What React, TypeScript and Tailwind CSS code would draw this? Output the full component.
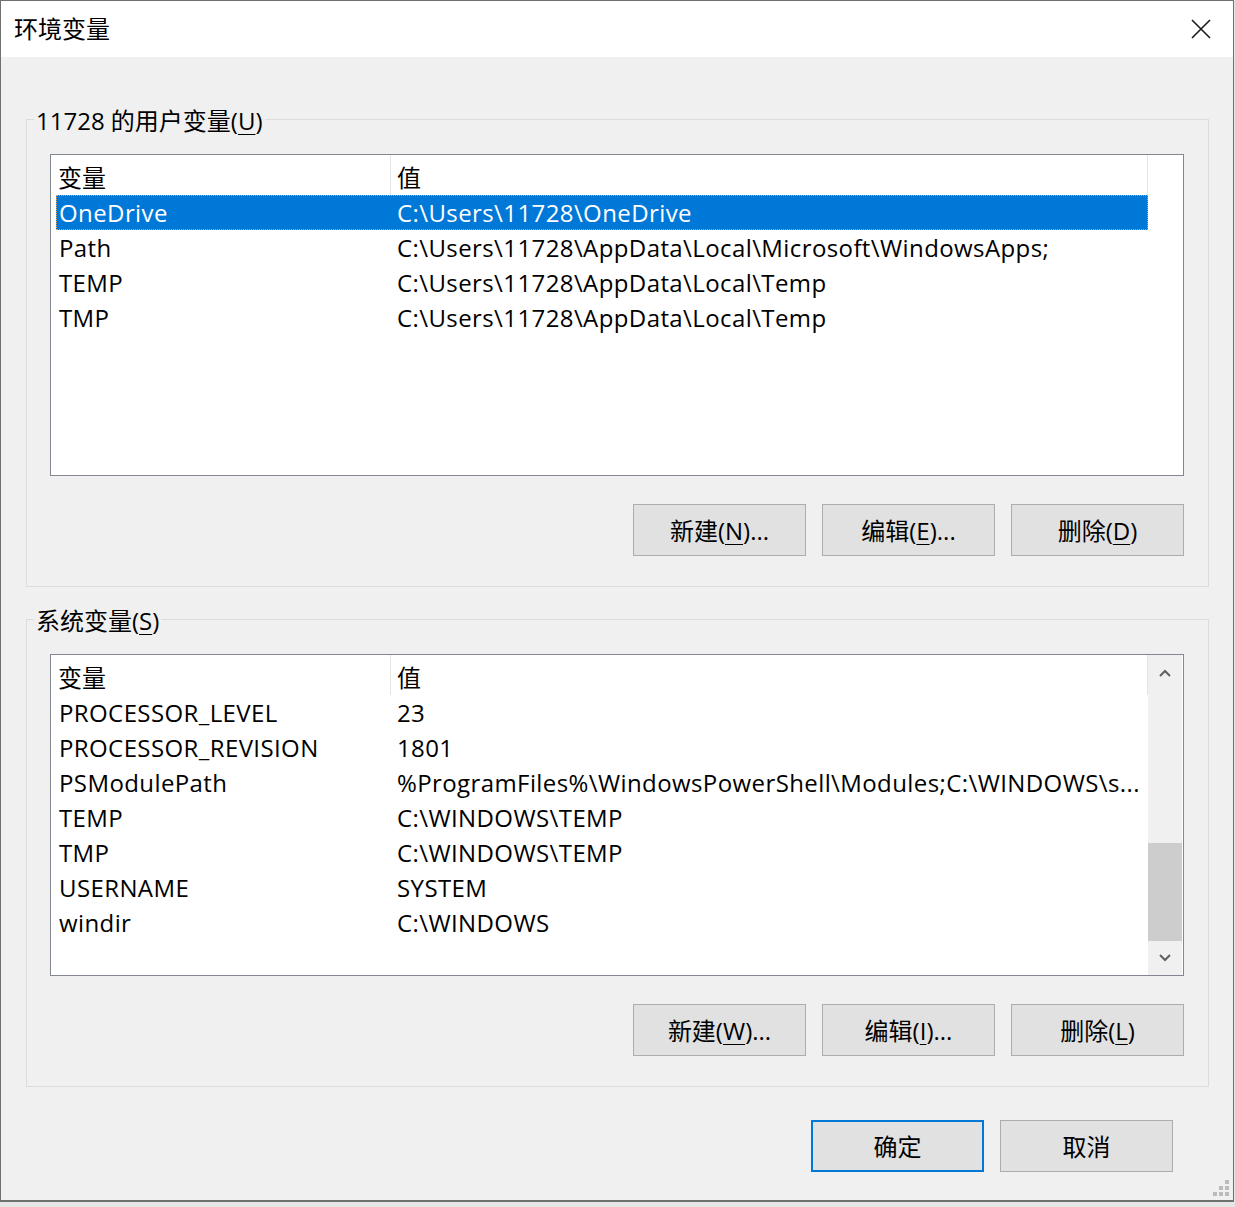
import React from "react";

const userVars: [string, string][] = [
  ["OneDrive", "C:\\Users\\11728\\OneDrive"],
  ["Path", "C:\\Users\\11728\\AppData\\Local\\Microsoft\\WindowsApps;"],
  ["TEMP", "C:\\Users\\11728\\AppData\\Local\\Temp"],
  ["TMP", "C:\\Users\\11728\\AppData\\Local\\Temp"],
];

const sysVars: [string, string][] = [
  ["PROCESSOR_LEVEL", "23"],
  ["PROCESSOR_REVISION", "1801"],
  ["PSModulePath", "%ProgramFiles%\\WindowsPowerShell\\Modules;C:\\WINDOWS\\s..."],
  ["TEMP", "C:\\WINDOWS\\TEMP"],
  ["TMP", "C:\\WINDOWS\\TEMP"],
  ["USERNAME", "SYSTEM"],
  ["windir", "C:\\WINDOWS"],
];

function Mn({ c }: { c: string }) {
  return <span className="underline decoration-1 underline-offset-[4px]">{c}</span>;
}

function Btn({ children, primary }: { children: React.ReactNode; primary?: boolean }) {
  return (
    <button
      className={
        primary
          ? "w-[173px] h-[52px] bg-[#e1e1e1] border-2 border-[#0078d7] text-[24px] text-black flex items-center justify-center pt-[2px]"
          : "w-[173px] h-[52px] bg-[#e1e1e1] border border-[#adadad] text-[24px] text-black flex items-center justify-center pt-[2px]"
      }
    >
      {children}
    </button>
  );
}

function Chevron({ up }: { up?: boolean }) {
  return (
    <svg width="12" height="8" viewBox="0 0 12 8">
      <path
        d={up ? "M1 7 L6 2 L11 7" : "M1 1 L6 6 L11 1"}
        fill="none"
        stroke="#606060"
        strokeWidth="2"
      />
    </svg>
  );
}

function Scrollbar() {
  return (
    <div className="w-[34px] bg-[#f0f0f0] flex flex-col">
      <div className="h-[34px] flex items-center justify-center pt-[2px]">
        <Chevron up />
      </div>
      <div className="flex-1 flex flex-col justify-end">
        <div className="h-[98px] bg-[#cdcdcd]" />
      </div>
      <div className="h-[34px] flex items-center justify-center">
        <Chevron />
      </div>
    </div>
  );
}

function VarList({
  rows,
  selected,
  scrollbar,
}: {
  rows: [string, string][];
  selected?: number;
  scrollbar?: boolean;
}) {
  return (
    <div className="h-[322px] border border-[#828790] bg-white flex">
      <div className="w-[1097px] flex flex-col">
        <div className="h-[40px] flex">
          <div className="w-[339px] flex items-center pl-[7px] pt-[5px]">变量</div>
          <div className="w-px h-full bg-[#e5e5e5]" />
          <div className="flex-1 flex items-center pl-[6px] pt-[5px]">值</div>
          <div className="w-px h-full bg-[#e5e5e5]" />
        </div>
        {rows.map(([n, v], i) => (
          <div
            key={n + i}
            className={
              i === selected
                ? "ml-[5px] w-[1092px] h-[35px] flex items-center pt-[1px] tracking-[0.4px] bg-[#0078d7] text-white outline outline-1 outline-dotted outline-[#e8a050] -outline-offset-1"
                : "ml-[5px] w-[1092px] h-[35px] flex items-center pt-[1px] tracking-[0.4px] text-black"
            }
          >
            <div className="w-[341px] pl-[3px] whitespace-nowrap">{n}</div>
            <div className="flex-1 whitespace-nowrap">{v}</div>
          </div>
        ))}
      </div>
      {scrollbar ? <Scrollbar /> : <div className="w-[34px]" />}
    </div>
  );
}

function Group({
  label,
  children,
  className,
}: {
  label: React.ReactNode;
  children: React.ReactNode;
  className?: string;
}) {
  return (
    <fieldset className={"border border-[#dcdcdc] " + (className ?? "")}>
      <legend className="ml-[7px] px-[2px] h-[32px] leading-[32px] text-[24px] text-black">
        <span className="relative top-[2px]">{label}</span>
      </legend>
      <div className="pl-[23px] pr-[24px] pb-[30px]">{children}</div>
    </fieldset>
  );
}

export default function App() {
  return (
    <div className="w-[1235px] h-[1207px] bg-[#e6e6e6] font-['Segoe_UI','Open_Sans','Noto_Sans_CJK_SC',sans-serif] text-[24px] text-black">
      <div className="relative w-[1234px] h-[1202px] border-t border-l border-r border-b-2 border-[#707070] flex flex-col">
        <div className="h-[56px] bg-white flex items-center justify-between pl-[13px] pr-[22px]">
          <span className="text-[24px] text-black">环境变量</span>
          <svg width="20" height="20" viewBox="0 0 20 20">
            <path d="M1 1 L19 19 M19 1 L1 19" stroke="#1a1a1a" strokeWidth="1.6" fill="none" />
          </svg>
        </div>
        <div className="flex-1 bg-[#f0f0f0] pl-[25px] pr-[24px] pt-[46px] flex flex-col">
          <Group
            label={
              <>
                11728 的用户变量(<Mn c="U" />)
              </>
            }
          >
            <div className="mt-[19px]">
              <VarList rows={userVars} selected={0} />
            </div>
            <div className="mt-[28px] flex justify-end gap-[16px]">
              <Btn>
                新建(<Mn c="N" />)...
              </Btn>
              <Btn>
                编辑(<Mn c="E" />)...
              </Btn>
              <Btn>
                删除(<Mn c="D" />)
              </Btn>
            </div>
          </Group>
          <Group
            className="mt-[16px]"
            label={
              <>
                系统变量(<Mn c="S" />)
              </>
            }
          >
            <div className="mt-[19px]">
              <VarList rows={sysVars} scrollbar />
            </div>
            <div className="mt-[28px] flex justify-end gap-[16px]">
              <Btn>
                新建(<Mn c="W" />)...
              </Btn>
              <Btn>
                编辑(<Mn c="I" />)...
              </Btn>
              <Btn>
                删除(<Mn c="L" />)
              </Btn>
            </div>
          </Group>
          <div className="mt-[33px] flex justify-end gap-[16px] pr-[36px]">
            <Btn primary>确定</Btn>
            <Btn>取消</Btn>
          </div>
        </div>
        <svg className="absolute right-[4px] bottom-[4px]" width="16" height="16" viewBox="0 0 16 16">
          <rect x="12" y="0" width="4" height="4" fill="#bcbcbc" />
          <rect x="6" y="6" width="4" height="4" fill="#bcbcbc" />
          <rect x="12" y="6" width="4" height="4" fill="#bcbcbc" />
          <rect x="0" y="12" width="4" height="4" fill="#bcbcbc" />
          <rect x="6" y="12" width="4" height="4" fill="#bcbcbc" />
          <rect x="12" y="12" width="4" height="4" fill="#bcbcbc" />
        </svg>
      </div>
    </div>
  );
}
